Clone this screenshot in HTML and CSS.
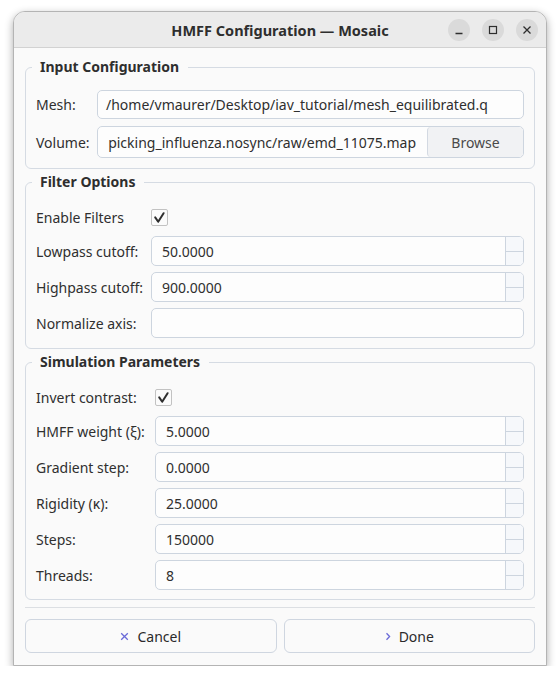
FILE: index.html
```html
<!DOCTYPE html>
<html>
<head>
<meta charset="utf-8">
<title>HMFF Configuration — Mosaic</title>
<link rel="stylesheet" href="styles.css">
</head>
<body>
<div class="window">
  <div class="titlebar">
    <div class="title">HMFF Configuration — Mosaic</div>
    <div class="controls">
      <span class="wbtn"><svg width="22" height="22" viewBox="0 0 22 22"><path d="M7.5 14.5 H14.5" stroke="#2e2e2e" stroke-width="1.3" fill="none"/></svg></span>
      <span class="wbtn"><svg width="22" height="22" viewBox="0 0 22 22"><rect x="7.5" y="7.5" width="7" height="7" stroke="#2e2e2e" stroke-width="1.2" fill="none"/></svg></span>
      <span class="wbtn"><svg width="22" height="22" viewBox="0 0 22 22"><path d="M7.5 7.5 L14.5 14.5 M14.5 7.5 L7.5 14.5" stroke="#2e2e2e" stroke-width="1.3" fill="none"/></svg></span>
    </div>
  </div>
  <div class="content">
    <fieldset class="group">
      <legend>Input Configuration</legend>
      <div class="form form-input">
        <label>Mesh:</label>
        <div class="field line"><span class="text">/home/vmaurer/Desktop/iav_tutorial/mesh_equilibrated.q</span></div>
        <label>Volume:</label>
        <div class="field browse-field">
          <div class="clip"><span class="text">picking_influenza.nosync/raw/emd_11075.map</span></div>
          <div class="browse">Browse</div>
        </div>
      </div>
    </fieldset>

    <fieldset class="group">
      <legend>Filter Options</legend>
      <div class="form form-filter">
        <label>Enable Filters</label>
        <div class="checkrow"><span class="check"><svg width="15" height="15" viewBox="0 0 15 15"><path d="M3.2 7.4 L6.2 11.8 L11.6 3.2" stroke="#2e2e2e" stroke-width="2" fill="none" stroke-linecap="round" stroke-linejoin="round"/></svg></span></div>
        <label>Lowpass cutoff:</label>
        <div class="field spin"><span class="val">50.0000</span><span class="arrows"><i></i><i></i></span></div>
        <label>Highpass cutoff:</label>
        <div class="field spin"><span class="val">900.0000</span><span class="arrows"><i></i><i></i></span></div>
        <label>Normalize axis:</label>
        <div class="field spin plain"><span class="val"></span></div>
      </div>
    </fieldset>

    <fieldset class="group">
      <legend>Simulation Parameters</legend>
      <div class="form form-sim">
        <label>Invert contrast:</label>
        <div class="checkrow"><span class="check"><svg width="15" height="15" viewBox="0 0 15 15"><path d="M3.2 7.4 L6.2 11.8 L11.6 3.2" stroke="#2e2e2e" stroke-width="2" fill="none" stroke-linecap="round" stroke-linejoin="round"/></svg></span></div>
        <label>HMFF weight (ξ):</label>
        <div class="field spin"><span class="val">5.0000</span><span class="arrows"><i></i><i></i></span></div>
        <label>Gradient step:</label>
        <div class="field spin"><span class="val">0.0000</span><span class="arrows"><i></i><i></i></span></div>
        <label>Rigidity (κ):</label>
        <div class="field spin"><span class="val">25.0000</span><span class="arrows"><i></i><i></i></span></div>
        <label>Steps:</label>
        <div class="field spin"><span class="val">150000</span><span class="arrows"><i></i><i></i></span></div>
        <label>Threads:</label>
        <div class="field spin"><span class="val">8</span><span class="arrows"><i></i><i></i></span></div>
      </div>
    </fieldset>

    <div class="sep"></div>

    <div class="buttons">
      <div class="btn"><svg width="9" height="9" viewBox="0 0 9 9"><path d="M1.2 1.2 L7.8 7.8 M7.8 1.2 L1.2 7.8" stroke="#6a6ad8" stroke-width="1.3" fill="none"/></svg><span>Cancel</span></div>
      <div class="btn"><svg width="6" height="9" viewBox="0 0 6 9"><path d="M1.5 1.2 L4.6 4.5 L1.5 7.8" stroke="#6a6ad8" stroke-width="1.3" fill="none"/></svg><span>Done</span></div>
    </div>
  </div>
</div>
</body>
</html>
```

FILE: styles.css
```css
* { box-sizing: border-box; }
html, body { margin: 0; padding: 0; }
body {
  background: #ffffff;
  font-family: "Noto Sans", "DejaVu Sans", sans-serif;
  font-size: 14px;
  color: #2f2f2f;
}
.window {
  margin: 11px 0 0 13px;
  width: 534px;
  height: 655px;
  border: 1px solid #b4b4b4;
  border-radius: 12px 12px 0 0;
  background: #fafafa;
  box-shadow: 0 3px 9px rgba(0, 0, 0, 0.33);
  display: flex;
  flex-direction: column;
  overflow: hidden;
}
.titlebar {
  height: 36px;
  flex: none;
  background: #ebebeb;
  border-bottom: 1px solid #d2d2d2;
  display: grid;
  grid-template-columns: 1fr auto 1fr;
  align-items: center;
  padding: 1px 8px 0 8px;
}
.title {
  grid-column: 2;
  font-weight: bold;
  font-size: 14.5px;
  color: #2e2e2e;
}
.controls {
  grid-column: 3;
  justify-self: end;
  display: flex;
  gap: 12px;
}
.wbtn {
  width: 22px;
  height: 22px;
  border-radius: 50%;
  background: #dadada;
  display: block;
}
.wbtn svg { display: block; }

.content {
  flex: 1;
  padding: 9px 11px 11px 11px;
  display: flex;
  flex-direction: column;
}
.group {
  margin: 0;
  border: 1px solid #d5dbe3;
  border-radius: 6px;
  padding: 13px 10px 10px 10px;
  min-width: 0;
}
.group + .group { margin-top: 3px; }
.group legend {
  font-weight: bold;
  line-height: 20px;
  padding: 0 9px 0 8px;
  margin-left: -4px;
  color: #2e2e2e;
}
.form {
  display: grid;
  column-gap: 7px;
  row-gap: 6px;
  align-items: center;
}
.form-input { grid-template-columns: 54px 1fr; row-gap: 7px; }
.form-filter { grid-template-columns: 108px 1fr; }
.form-sim { grid-template-columns: 112px 1fr; }
.group:last-of-type { padding-bottom: 9px; }

label { white-space: nowrap; }

.field {
  height: 30px;
  border: 1px solid #cdd5df;
  border-radius: 5px;
  background: #fdfdfd;
  display: flex;
  align-items: center;
  overflow: hidden;
  white-space: nowrap;
}
.line { height: 29px; padding: 0 8px; }
.browse-field { height: 32px; }
.clip {
  flex: 1;
  min-width: 0;
  overflow: hidden;
  display: flex;
  justify-content: flex-end;
  margin: 0 11px 0 8px;
}
.clip .text { flex: none; }
.browse {
  width: 96px;
  align-self: stretch;
  border-left: 1px solid #d3d9e2;
  border-radius: 4px;
  background: #f1f2f4;
  display: flex;
  align-items: center;
  justify-content: center;
  color: #4a4a4a;
}
.spin { padding-left: 10px; }
.spin .val { flex: 1; }
.arrows {
  width: 18px;
  align-self: stretch;
  border-left: 1px solid #cdd5df;
  background: #f6f8fb;
  display: flex;
  flex-direction: column;
}
.arrows i { flex: 1; }
.arrows i + i { border-top: 1px solid #cdd5df; }

.checkrow {
  height: 25px;
  display: flex;
  align-items: center;
}
.check {
  width: 17px;
  height: 17px;
  border: 1px solid #c2c2c2;
  border-radius: 2px;
  background: #fbfbfb;
  display: flex;
  align-items: center;
  justify-content: center;
}
.check svg { display: block; }

.sep {
  height: 1px;
  background: #dcdfe3;
  margin-top: 7px;
  flex: none;
}
.buttons {
  margin-top: 11px;
  display: grid;
  grid-template-columns: 1fr 1fr;
  gap: 7px;
}
.btn {
  height: 34px;
  border: 1px solid #cfd6e0;
  border-radius: 6px;
  background: #fafafa;
  display: flex;
  align-items: center;
  justify-content: center;
  gap: 8px;
  color: #2a2a2a;
}
.btn svg { display: block; }
```
